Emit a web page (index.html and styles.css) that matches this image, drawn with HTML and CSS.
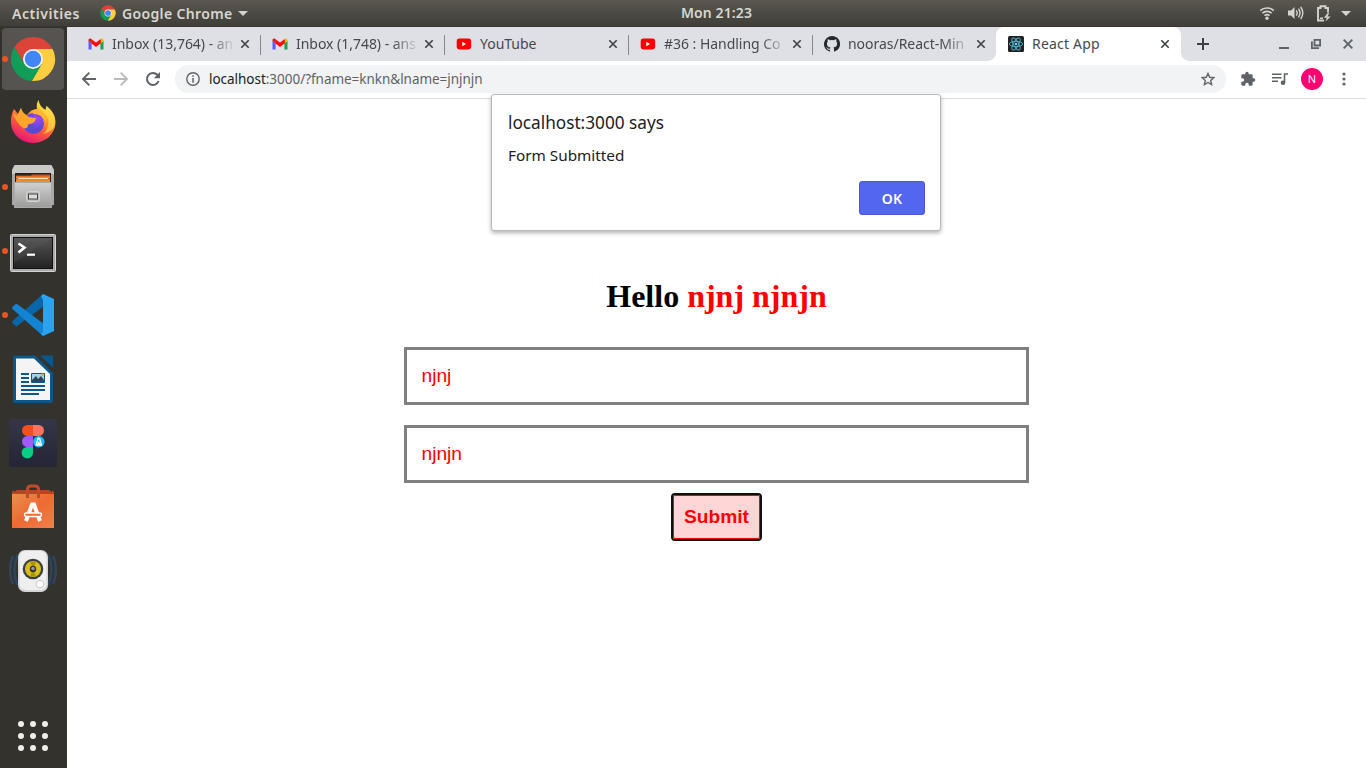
FILE: index.html
```html
<!DOCTYPE html>
<html lang="en">
<head>
<meta charset="utf-8">
<title>React App</title>
<link rel="stylesheet" href="styles.css">
</head>
<body>
<svg class="defs" width="0" height="0">
  <defs>
    <linearGradient id="ff" x1="0.8" y1="0" x2="0.3" y2="1"><stop offset="0" stop-color="#fff44f"/><stop offset=".35" stop-color="#ffa62b"/><stop offset=".65" stop-color="#ff5540"/><stop offset="1" stop-color="#e6107c"/></linearGradient>
    <radialGradient id="ffp" cx=".65" cy=".25"><stop offset="0" stop-color="#a744f5"/><stop offset="1" stop-color="#5b4ad0"/></radialGradient>
    <linearGradient id="metal" x1="0" y1="0" x2="0" y2="1"><stop offset="0" stop-color="#d0d0d0"/><stop offset="1" stop-color="#9c9c9a"/></linearGradient>
    <linearGradient id="term" x1="0" y1="0" x2="0" y2="1"><stop offset="0" stop-color="#555"/><stop offset="1" stop-color="#222"/></linearGradient>
    <linearGradient id="bag" x1="0" y1="0" x2="1" y2="1"><stop offset="0" stop-color="#e89050"/><stop offset=".5" stop-color="#ee6a32"/><stop offset="1" stop-color="#f08050"/></linearGradient>
    <linearGradient id="fig" x1="0" y1="0" x2="0" y2="1"><stop offset="0" stop-color="#353648"/><stop offset="1" stop-color="#232436"/></linearGradient>
    <symbol id="chrome" viewBox="1 1 46 46">
      <path fill="#db4437" d="M5.54 12.03A22 22 0 0 1 43.6 14H24v10l-8.66 5z"/>
      <path fill="#ffcd40" d="M43.6 14A22 22 0 0 1 22.86 45.97L32.66 29 24 24V14z"/>
      <path fill="#0f9d58" d="M22.86 45.97A22 22 0 0 1 5.54 12.03L15.34 29 24 24l8.66 5z"/>
      <circle cx="24" cy="24" r="10" fill="#f1f1f1"/><circle cx="24" cy="24" r="8.2" fill="#4285f4"/>
    </symbol>
    <symbol id="gmail" viewBox="0 0 16 12">
      <path fill="#5b5bff" d="M1 11.5h2.6V5.2L.5 2.8V11q0 .5.5.5z"/><path fill="#1ea446" d="M12.4 11.5H15q.5 0 .5-.5V2.8l-3.1 2.4z"/>
      <path fill="#fbbc04" d="M12.4 1.3v4L15.5 3V2Q15 .1 13.2.7z"/><path fill="#c5221f" d="M.5 3l3.1 2.3v-4L2.8.7Q.9.3.5 2z"/>
      <path fill="#ff0b0b" d="M3.2 1L8 4.6 12.8 1v4.3L8 9 3.2 5.3z"/>
    </symbol>
    <symbol id="yt" viewBox="0 0 16 12"><rect x=".7" y=".5" width="14.4" height="11" rx="2.4" fill="#f00"/><path fill="#fff" d="M6.300 3.700v4.600L10 6z"/></symbol>
    <symbol id="x" viewBox="0 0 10 10"><path d="M1.300 1.300l7.400 7.400M8.700 1.300L1.300 8.700" fill="none" stroke="currentColor" stroke-width="1.600"/></symbol>
  </defs>
</svg>

<header class="topbar">
  <span class="activities">Activities</span>
  <svg class="app-icon" width="16" height="16"><use href="#chrome"/></svg>
  <span class="app-name">Google Chrome</span>
  <i class="caret"></i>
  <span class="clock">Mon 21:23</span>
  <div class="status">
    <svg width="16" height="16" viewBox="0 0 16 16" fill="none" stroke="#d6d3cd" stroke-width="1.600"><path d="M1.200 5.600a10 10 0 0 1 13.600 0M3.400 8.200a6.800 6.800 0 0 1 9.200 0M5.500 10.700a3.700 3.700 0 0 1 5 0"/><circle cx="8" cy="13.200" r="1.700" fill="#d6d3cd" stroke="none"/></svg>
    <svg width="17" height="16" viewBox="0 0 16 16" fill="none" stroke="#d6d3cd" stroke-width="1.400"><path fill="#d6d3cd" stroke="none" d="M.5 5.500h3L7 2v12l-3.500-3.500h-3z"/><path d="M8.800 5.300q1.800 2.700 0 5.400M11 3.600q3 4.400 0 8.800M13.200 2q4.200 6 0 12"/></svg>
    <svg width="16" height="17" viewBox="0 0 16 17" fill="none" stroke="#d6d3cd" stroke-width="1.900"><path d="M8 15.500H2V3h2.500V1.300h5V3H12v4.500"/><path fill="#d6d3cd" stroke="none" d="M11.800 8l-4 4.700h3L9.500 16.500l5.200-5h-3.200l1.700-3.500zM4 12.500h3V14H4z"/></svg>
    <i class="caret"></i>
  </div>
</header>

<div class="desktop">
  <nav class="dock">
    <div class="item active run"><svg width="46" height="46"><use href="#chrome"/></svg></div>
    <div class="item"><svg width="48" height="48" viewBox="0 0 48 48">
      <path fill="url(#ff)" d="M29.500 1c.5 5 3 8 7 10l1-4c6 5 9 10 9 17A22.300 20.800 0 0 1 2 25c-.3-7 1-11 3-15l4 5 3-6c0 3 3 6 6 7q4-6 10-6-1-5 1.500-9z"/>
      <path fill="#ffe04a" d="M29.500 1C28 6 31 10 35 14c4 3 5 8 4 13-1 4-3 7-6 8 8-1 13-6 13-12 0-7-3-12-8.500-16l-1 4q-6-4-7-10z" opacity=".65"/>
      <circle cx="24.500" cy="24.500" r="10.500" fill="url(#ffp)"/>
      <path fill="#ffa52e" d="M4 14l4 3 4-8c1 4 4 7 8 9q3 1 7 1l-1 3q-1 2-7 3.500c0 3-2 4-4 4q-8-5-11-15.500z"/>
      <path fill="#ffb62f" d="M25 12c5-2 10 1 12 6 1 3 0 5 0 5-3-6-7-8-13-8z"/>
    </svg></div>
    <div class="item run"><svg width="48" height="48" viewBox="0 0 48 48">
      <path fill="#a7a7a5" d="M3 10h42v32H3z"/><path fill="#c9c9c8" d="M5.500 2h37L45 7v4H3V7z"/><path fill="#242424" d="M6 10h36v9H6z"/>
      <path fill="#d9531e" d="M7 12.500h15l1-1h18V18H7z"/><path fill="#fbe3bd" d="M9 15h30v1.200H9z"/><path fill="#ed8b35" d="M7 13.500h34V15H7zM7 16.200h34V19H7z"/>
      <path fill="url(#metal)" stroke="#aaa" d="M5.500 19.500h37v25h-37z"/><rect x="17.500" y="28.500" width="13" height="10" rx="2" fill="#bbb" stroke="#d5d5d5"/><rect x="19.500" y="31" width="9" height="5" fill="#ddd" stroke="#444"/>
    </svg></div>
    <div class="item run"><svg width="48" height="48" viewBox="0 0 48 48">
      <rect x="1.500" y="7.500" width="45" height="37" rx="1" fill="#aaa" stroke="#d4d4d4"/><rect x="4.500" y="10.500" width="39" height="31" fill="url(#term)" stroke="#111"/><path fill="#666" opacity=".2" d="M5 11h38L5 36z"/>
      <path fill="none" stroke="#fff" stroke-width="2.600" d="M9.500 16.500l6 4-6 5"/><path stroke="#fff" stroke-width="2.200" d="M18 27.700h8"/>
    </svg></div>
    <div class="item run"><svg width="48" height="48" viewBox="0 0 48 48">
      <path fill="#0867a9" d="M34 3L3.500 30q-.9 1-.1 2l3 2.800q1 .6 2 0L35 15z"/>
      <path fill="#1284d1" d="M34 45L3.500 18q-.9-1-.1-2l3-2.800q1-.6 2 0L35 33z"/>
      <path fill="#2aa4f0" d="M34 3l11 5v32l-11 5-2-2 2-2V9l-2-4z"/>
    </svg></div>
    <div class="item"><svg width="48" height="48" viewBox="0 0 48 48">
      <path fill="#0b578c" d="M6 .5h20L44 18v28q0 2-2 2H6q-2 0-2-2V2.500q0-2 2-2zM31 .5h13v12z"/><path fill="#f4f4f4" d="M7 3.500h18L41 19v26H7z"/>
      <path stroke="#0b578c" stroke-width="2" d="M12 19h8M12 23h8M12 27h8M12 31h24M12 35h24M12 39h18"/><path fill="#9fd1f1" stroke="#0b578c" d="M22.500 18.500h13v9h-13z"/><path fill="#345" d="M23 27v-2l4-4 2 3 3-3 3 4v2z"/><circle cx="33.500" cy="20" r="1.400" fill="#e5b52c"/>
    </svg></div>
    <div class="item"><svg width="48" height="48" viewBox="0 0 48 48">
      <rect width="48" height="48" rx="3" fill="url(#fig)"/><path fill="#f24e1e" d="M24 6h-5.500a5.500 5.500 0 0 0 0 11H24z"/><path fill="#ff7262" d="M24 6h5.500a5.500 5.500 0 0 1 0 11H24z"/><path fill="#a259ff" d="M24 17h-5.500a5.500 5.500 0 0 0 0 11H24z"/><path fill="#0acf83" d="M24 28h-5.500a5.700 5.700 0 1 0 5.500 5.500z"/><circle cx="29.800" cy="22.700" r="5.700" fill="#1abcfe"/><path fill="none" stroke="#fff" stroke-width="1.300" d="M29 19.500h1.600l1.900 6.500h-2l-.7-3-.7 3h-2z"/>
    </svg></div>
    <div class="item"><svg width="48" height="48" viewBox="0 0 48 48">
      <path fill="#b94420" d="M3 9l2-2v2l3-2h32l3 2V7l2 2v6H3z"/><path fill="url(#bag)" d="M3 11h42v34H3z"/><path fill="none" stroke="#c24b25" stroke-width="3" d="M18.500 15V7q0-4 3-4h5q3 0 3 4v8"/>
      <path fill="none" stroke="#fff" stroke-width="4" d="M17 38l6-16.500h2L31 38"/><rect x="15.500" y="30" width="17" height="3.500" rx="1.700" fill="#ee6a32" stroke="#fff" stroke-width="1.500"/>
    </svg></div>
    <div class="item"><svg width="48" height="48" viewBox="0 0 48 48">
      <g fill="none" stroke="#2e4c70" stroke-width="2.500" opacity=".75"><path d="M4 9q-6 14 0 28M8.500 8q-6 15 0 30M44 9q6 14 0 28M39.500 8q6 15 0 30"/></g>
      <rect x="9" y="3" width="30" height="42" rx="7" fill="#d5d5d5"/><rect x="10.500" y="4" width="27" height="39" rx="6" fill="#efefef"/>
      <circle cx="24" cy="22" r="10.300" fill="#3c4040"/><circle cx="24" cy="22" r="8" fill="#d8bd18"/><path fill="#a8930f" d="M24 22l-3-7.500h6zM24 22l-3 7.500h6z"/><circle cx="24" cy="22" r="3.200" fill="#333"/><circle cx="24" cy="21.500" r="1.800" fill="#999"/><circle cx="31" cy="37" r="3.800" fill="#fff" stroke="#bbb" stroke-width=".8"/>
    </svg></div>
    <svg class="apps" width="32" height="32" viewBox="0 0 32 32" fill="#eeeeec"><circle cx="4" cy="4" r="3"/><circle cx="16" cy="4" r="3"/><circle cx="28" cy="4" r="3"/><circle cx="4" cy="16" r="3"/><circle cx="16" cy="16" r="3"/><circle cx="28" cy="16" r="3"/><circle cx="4" cy="28" r="3"/><circle cx="16" cy="28" r="3"/><circle cx="28" cy="28" r="3"/></svg>
  </nav>

  <main class="browser">
    <div class="tabs">
      <div class="tab"><svg class="fav" width="16" height="12"><use href="#gmail"/></svg><span class="title fade">Inbox (13,764) - an</span><svg class="close" width="10" height="10"><use href="#x"/></svg></div>
      <div class="tab"><svg class="fav" width="16" height="12"><use href="#gmail"/></svg><span class="title fade">Inbox (1,748) - ans</span><svg class="close" width="10" height="10"><use href="#x"/></svg></div>
      <div class="tab"><svg class="fav" width="16" height="12"><use href="#yt"/></svg><span class="title">YouTube</span><svg class="close" width="10" height="10"><use href="#x"/></svg></div>
      <div class="tab"><svg class="fav" width="16" height="12"><use href="#yt"/></svg><span class="title fade">#36 : Handling Co</span><svg class="close" width="10" height="10"><use href="#x"/></svg></div>
      <div class="tab last"><svg class="fav" width="16" height="16" viewBox="0 0 16 16"><path fill="#24292e" d="M8 0a8 8 0 0 0-2.530 15.590c.4.070.55-.17.55-.38v-1.340c-2.230.48-2.700-1.070-2.700-1.070-.36-.92-.89-1.170-.89-1.170-.73-.5.060-.49.060-.49.800.060 1.230.83 1.230.83.710 1.220 1.870.87 2.330.66.070-.52.280-.87.510-1.070-1.780-.2-3.640-.89-3.640-3.950 0-.87.310-1.590.82-2.150-.08-.2-.36-1.020.080-2.120 0 0 .67-.21 2.200.82a7.600 7.600 0 0 1 4 0c1.530-1.040 2.200-.82 2.200-.82.440 1.100.16 1.920.080 2.120.51.560.82 1.270.82 2.150 0 3.070-1.870 3.750-3.650 3.950.29.250.54.730.54 1.480v2.190c0 .21.150.46.550.38A8 8 0 0 0 8 0z"/></svg><span class="title fade">nooras/React-Min</span><svg class="close" width="10" height="10"><use href="#x"/></svg></div>
      <div class="tab current"><svg class="fav" width="16" height="16" viewBox="0 0 16 16"><rect width="16" height="16" rx="1.500" fill="#222"/><g fill="none" stroke="#4bb4cf" stroke-width=".9"><ellipse cx="8" cy="8" rx="6.700" ry="2.600"/><ellipse cx="8" cy="8" rx="6.700" ry="2.600" transform="rotate(60 8 8)"/><ellipse cx="8" cy="8" rx="6.700" ry="2.600" transform="rotate(120 8 8)"/></g><circle cx="8" cy="8" r="1.300" fill="#61dafb"/></svg><span class="title react">React App</span><svg class="close" width="10" height="10"><use href="#x"/></svg></div>
      <svg class="newtab" width="12" height="12" viewBox="0 0 12 12"><path d="M6 0v12M0 6h12" stroke="#3c4043" stroke-width="2"/></svg>
      <div class="winctl">
        <svg width="10" height="10" viewBox="0 0 10 10"><path d="M0 9h10" stroke="#5f6368" stroke-width="2"/></svg>
        <svg width="10" height="10" viewBox="0 0 10 10" fill="none" stroke="#5f6368" stroke-width="1.800"><path d="M3.500.900h5.600v5.600H3.500zM.900 2.500v6.600H8"/></svg>
        <svg width="10" height="10" viewBox="0 0 10 10"><path d="M.7.700l8.600 8.600M9.300.700L.7 9.300" stroke="#5f6368" stroke-width="1.900"/></svg>
      </div>
    </div>

    <div class="toolbar">
      <svg class="nav" width="16" height="16" viewBox="0 0 16 16" fill="none" stroke="#5f6368" stroke-width="1.900"><path d="M15 8H2.500M8.300 1.700L2 8l6.300 6.300"/></svg>
      <svg class="nav" width="16" height="16" viewBox="0 0 16 16" fill="none" stroke="#babcbe" stroke-width="1.900"><path d="M1 8h12.500M7.700 1.700L14 8l-6.300 6.300"/></svg>
      <svg class="nav" width="16" height="16" viewBox="0 0 16 16"><path fill="none" stroke="#5f6368" stroke-width="2" d="M13.600 10A6 6 0 1 1 12.300 3.800L14 5.500"/><path fill="#5f6368" d="M15 1v6.200H8.800z"/></svg>
      <div class="omnibox">
        <svg width="14" height="14" viewBox="0 0 14 14"><circle cx="7" cy="7" r="6.200" fill="none" stroke="#5f6368" stroke-width="1.400"/><path stroke="#5f6368" stroke-width="1.500" d="M7 3.300v1.500M7 6v4.700"/></svg>
        <span class="url"><b>localhost</b>:3000/?fname=knkn&amp;lname=jnjnjn</span>
        <svg class="star" width="14" height="14" viewBox="0 0 14 14"><path fill="none" stroke="#5f6368" stroke-width="1.400" d="M7 1.500l1.700 3.800 4.100.4-3.100 2.800.9 4.100L7 10.500l-3.600 2.100.9-4.100L1.200 5.700l4.100-.4z"/></svg>
      </div>
      <div class="actions">
        <svg width="16" height="16" viewBox="0 0 24 24"><path fill="#5f6368" d="M20.500 11H19V7a2 2 0 0 0-2-2h-4V3.500a2.500 2.500 0 0 0-5 0V5H4a2 2 0 0 0-2 2v3.800h1.500a2.700 2.700 0 0 1 0 5.400H2V20c0 1.100.9 2 2 2h3.800v-1.500a2.700 2.700 0 0 1 5.400 0V22H17a2 2 0 0 0 2-2v-4h1.500a2.500 2.500 0 0 0 0-5z"/></svg>
        <svg width="16" height="14" viewBox="0 0 16 14"><path fill="none" stroke="#5f6368" stroke-width="1.600" d="M0 2.200h9.500M0 5.700h9.500M0 9.200h6M12.500 10.500V2H16"/><circle cx="11" cy="10.800" r="2.300" fill="#5f6368"/></svg>
        <span class="avatar">N</span>
        <svg width="4" height="14" viewBox="0 0 4 14" fill="#5f6368"><circle cx="2" cy="2" r="1.600"/><circle cx="2" cy="7" r="1.600"/><circle cx="2" cy="12" r="1.600"/></svg>
      </div>
    </div>

    <section class="page">
      <h1>Hello <span>njnj njnjn</span></h1>
      <form class="form">
        <input type="text" value="njnj">
        <input type="text" value="njnjn">
        <button type="button">Submit</button>
      </form>
    </section>

    <div class="dialog">
      <div class="dialog-title">localhost:3000 says</div>
      <div class="dialog-text">Form Submitted</div>
      <button class="ok" type="button">OK</button>
    </div>
  </main>
</div>
</body>
</html>
```
FILE: styles.css
```css
* { box-sizing: border-box; }
body { margin: 0; width: 1366px; height: 768px; overflow: hidden; font-family: "Noto Sans", sans-serif; background: #fff; }
svg { display: block; flex: none; }
.defs { position: absolute; }

.topbar { position: relative; display: flex; align-items: center; height: 27px; padding: 0 15px 0 12px; background: linear-gradient(#59574f, #3f3e39); border-bottom: 1px solid #3b332e; color: #d9d6d0; font-size: 14px; font-weight: 600; line-height: 26px; white-space: nowrap; }
.activities { width: 88px; padding-top: 1px; letter-spacing: .55px; }
.app-icon { margin-right: 6px; }
.app-name { width: 111px; padding-top: 1px; letter-spacing: .35px; }
.caret { margin-left: 5px; border: 5px solid transparent; border-top-color: #d6d3cd; border-bottom: 0; }
.clock { position: absolute; left: 681px; top: 0; letter-spacing: .1px; }
.status { display: flex; align-items: center; margin-left: auto; gap: 12px; }
.status .caret { margin-left: -3px; }

.desktop { display: flex; height: 741px; }
.dock { display: flex; flex-direction: column; align-items: center; width: 67px; flex: none; background: #33322d; }
.item { position: relative; display: flex; align-items: center; justify-content: center; width: 67px; height: 64px; padding-right: 1px; }
.item.active::before { content: ""; position: absolute; left: 2px; top: 1px; width: 62px; height: 62px; border-radius: 4px; background: #555450; }
.item svg { position: relative; }
.run::after { content: ""; position: absolute; left: 2px; top: 29px; width: 6px; height: 6px; border-radius: 50%; background: #e95420; }
.apps { margin: 117px 1px 0 0; }

.browser { position: relative; flex: 1; display: flex; flex-direction: column; }
.tabs { display: flex; height: 34px; padding-left: 9px; align-items: center; background: #dee0e6; color: #45494d; }
.tab { position: relative; display: flex; align-items: center; width: 184px; height: 34px; padding-left: 12px; }
.tab:not(.last):not(.current)::after { content: ""; position: absolute; right: -1px; top: 8px; width: 1px; height: 20px; background: #85888d; }
.fav { margin-right: 8px; }
.title { width: 124px; font-size: 14px; line-height: 20px; white-space: nowrap; letter-spacing: -.03px; }
.react { letter-spacing: .2px; }
.fade { -webkit-mask-image: linear-gradient(90deg, #000 78%, transparent); mask-image: linear-gradient(90deg, #000 78%, transparent); }
.close { position: absolute; left: 164px; top: 12px; color: #3c4043; }
.current { width: 185px; background: #fff; border-radius: 8px 8px 0 0; }
.current::before { content: ""; position: absolute; left: -8px; bottom: 0; width: 8px; height: 8px; background: radial-gradient(circle at 0 0, transparent 7.5px, #fff 8px); }
.current::after { content: ""; position: absolute; right: -8px; bottom: 0; width: 8px; height: 8px; background: radial-gradient(circle at 100% 0, transparent 7.5px, #fff 8px); }
.newtab { margin-left: 16px; }
.winctl { display: flex; gap: 22px; margin: 0 13px 0 auto; }

.toolbar { display: flex; align-items: center; height: 38px; padding: 0 20px 2px 14px; border-bottom: 1px solid #d9dbde; background: #fff; }
.nav { margin-right: 16px; }
.omnibox { display: flex; align-items: center; width: 1051px; height: 28px; margin-left: -2px; padding: 0 11px; border-radius: 14px; background: #f1f3f4; }
.url { margin-left: 9px; font-size: 13.500px; line-height: 20px; letter-spacing: -.03px; color: #5f6368; white-space: nowrap; }
.url b { font-weight: 400; color: #202124; }
.star { margin-left: auto; }
.actions { display: flex; align-items: center; margin-left: auto; gap: 15px; }
.avatar { width: 22px; height: 22px; margin-left: -2px; margin-right: 4px; border-radius: 50%; background: #ff0070; color: #fff; font-size: 11px; line-height: 22px; text-align: center; }
.actions svg:first-child { margin-right: 1px; margin-left: -1px; }

.page { flex: 1; display: flex; flex-direction: column; align-items: center; padding-top: 179px; font-family: "Liberation Serif", serif; }
h1 { margin: 0; font-size: 32px; line-height: 36px; }
h1 span { color: red; }
.form { display: flex; flex-direction: column; align-items: center; width: 625px; margin-top: 33px; }
.form input { width: 625px; height: 58px; margin-bottom: 20px; padding: 0 14.500px; border: 3px solid gray; font: 19.200px "Liberation Sans", sans-serif; color: red; background: #fff; }
.form button { width: 87px; height: 44px; margin-top: -8px; padding: 0; border: 1px solid red; outline: 2px solid #101010; border-radius: 2px; background: #ffd6d6; color: red; font: bold 19.200px "Liberation Sans", sans-serif; }

.dialog { position: absolute; left: 424px; top: 67px; display: flex; flex-direction: column; width: 450px; height: 137px; padding: 16px; background: #fff; border: 1px solid #b8b8b8; border-radius: 3px; box-shadow: 0 2px 4px rgba(0,0,0,.3); color: #202124; }
.dialog-title { font-size: 17.200px; line-height: 24px; white-space: nowrap; }
.dialog-text { margin-top: 9px; font-size: 15.300px; line-height: 22px; white-space: nowrap; }
.ok { align-self: flex-end; width: 66px; height: 34px; margin: 15px -1px 0 0; padding: 0; border: 1px solid #4a57d8; border-radius: 3px; background: #5266f0; color: #fff; font: 600 14px "Noto Sans", sans-serif; letter-spacing: .3px; flex: none; }
```
